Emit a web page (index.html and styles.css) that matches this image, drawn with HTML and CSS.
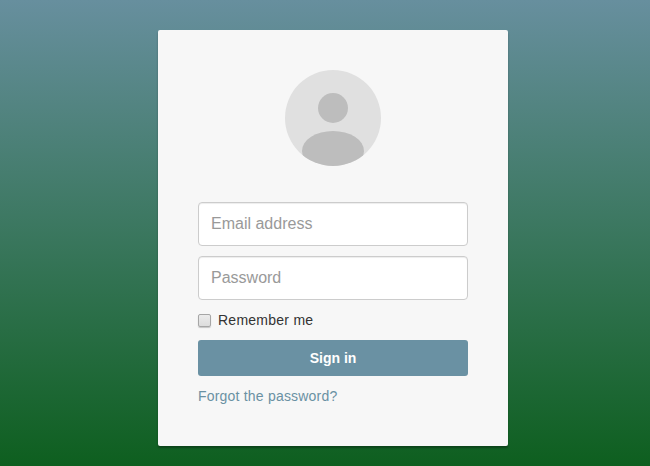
FILE: index.html
```html
<!DOCTYPE html>
<html lang="en">
<head>
<meta charset="utf-8">
<title>Sign in</title>
<link rel="stylesheet" href="styles.css">
</head>
<body>
<main class="card">
  <svg class="avatar" width="96" height="96" viewBox="0 0 96 96" role="img" aria-label="Profile picture">
    <defs><clipPath id="round"><circle cx="48" cy="48" r="48"/></clipPath></defs>
    <circle cx="48" cy="48" r="48" fill="#e0e0e0"/>
    <g clip-path="url(#round)" fill="#bdbdbd">
      <circle cx="48" cy="38" r="15"/>
      <ellipse cx="48" cy="81" rx="31" ry="20"/>
    </g>
  </svg>
  <form class="form">
    <input class="field" type="email" placeholder="Email address">
    <input class="field" type="password" placeholder="Password">
    <label class="remember"><input class="check" type="checkbox"><span>Remember me</span></label>
    <button class="submit" type="button">Sign in</button>
  </form>
  <a class="forgot" href="#">Forgot the password?</a>
</main>
</body>
</html>
```
FILE: styles.css
```css
* { box-sizing: border-box; }
html, body { height: 100%; }
body {
  margin: 0;
  padding-top: 30px;
  overflow: hidden;
  background: linear-gradient(#678f9e, #0e5f1f) no-repeat;
  font-family: "Liberation Sans", Arial, sans-serif;
  color: #333;
}
.card {
  display: flex;
  flex-direction: column;
  width: 350px;
  height: 416px;
  margin-left: 158px;
  padding: 40px;
  background: #f7f7f7;
  border-radius: 2px;
  box-shadow: 0 2px 2px rgba(0, 0, 0, 0.3);
}
.avatar { display: block; align-self: center; flex: none; margin-bottom: 36px; }
.form { display: flex; flex-direction: column; }
.field {
  width: 100%;
  height: 44px;
  margin-bottom: 10px;
  padding: 10px 12px;
  font: 16px "Liberation Sans", Arial, sans-serif;
  color: #555;
  background: #fff;
  border: 1px solid #ccc;
  border-radius: 4px;
  box-shadow: inset 0 1px 1px rgba(0, 0, 0, 0.075);
  outline: none;
}
.field::placeholder { color: #999; opacity: 1; }
.remember {
  display: flex;
  align-items: center;
  height: 20px;
  margin-bottom: 10px;
  font-size: 14px;
  line-height: 20px;
  letter-spacing: 0.25px;
}
.check {
  appearance: none;
  width: 13px;
  height: 13px;
  margin: 0 7px 0 0;
  flex: none;
  background: linear-gradient(#ececec, #dcdcdc);
  border: 1px solid #a6a6a6;
  border-radius: 2px;
  box-shadow: 0 1px 1px rgba(0, 0, 0, 0.2);
}
.submit {
  height: 36px;
  padding: 0;
  font: bold 14px "Liberation Sans", Arial, sans-serif;
  color: #fff;
  background: #6a91a3;
  border: 0;
  border-radius: 3px;
}
.forgot {
  margin-top: 10px;
  font-size: 14px;
  line-height: 20px;
  letter-spacing: 0.2px;
  color: #6a91a3;
  text-decoration: none;
}
```
